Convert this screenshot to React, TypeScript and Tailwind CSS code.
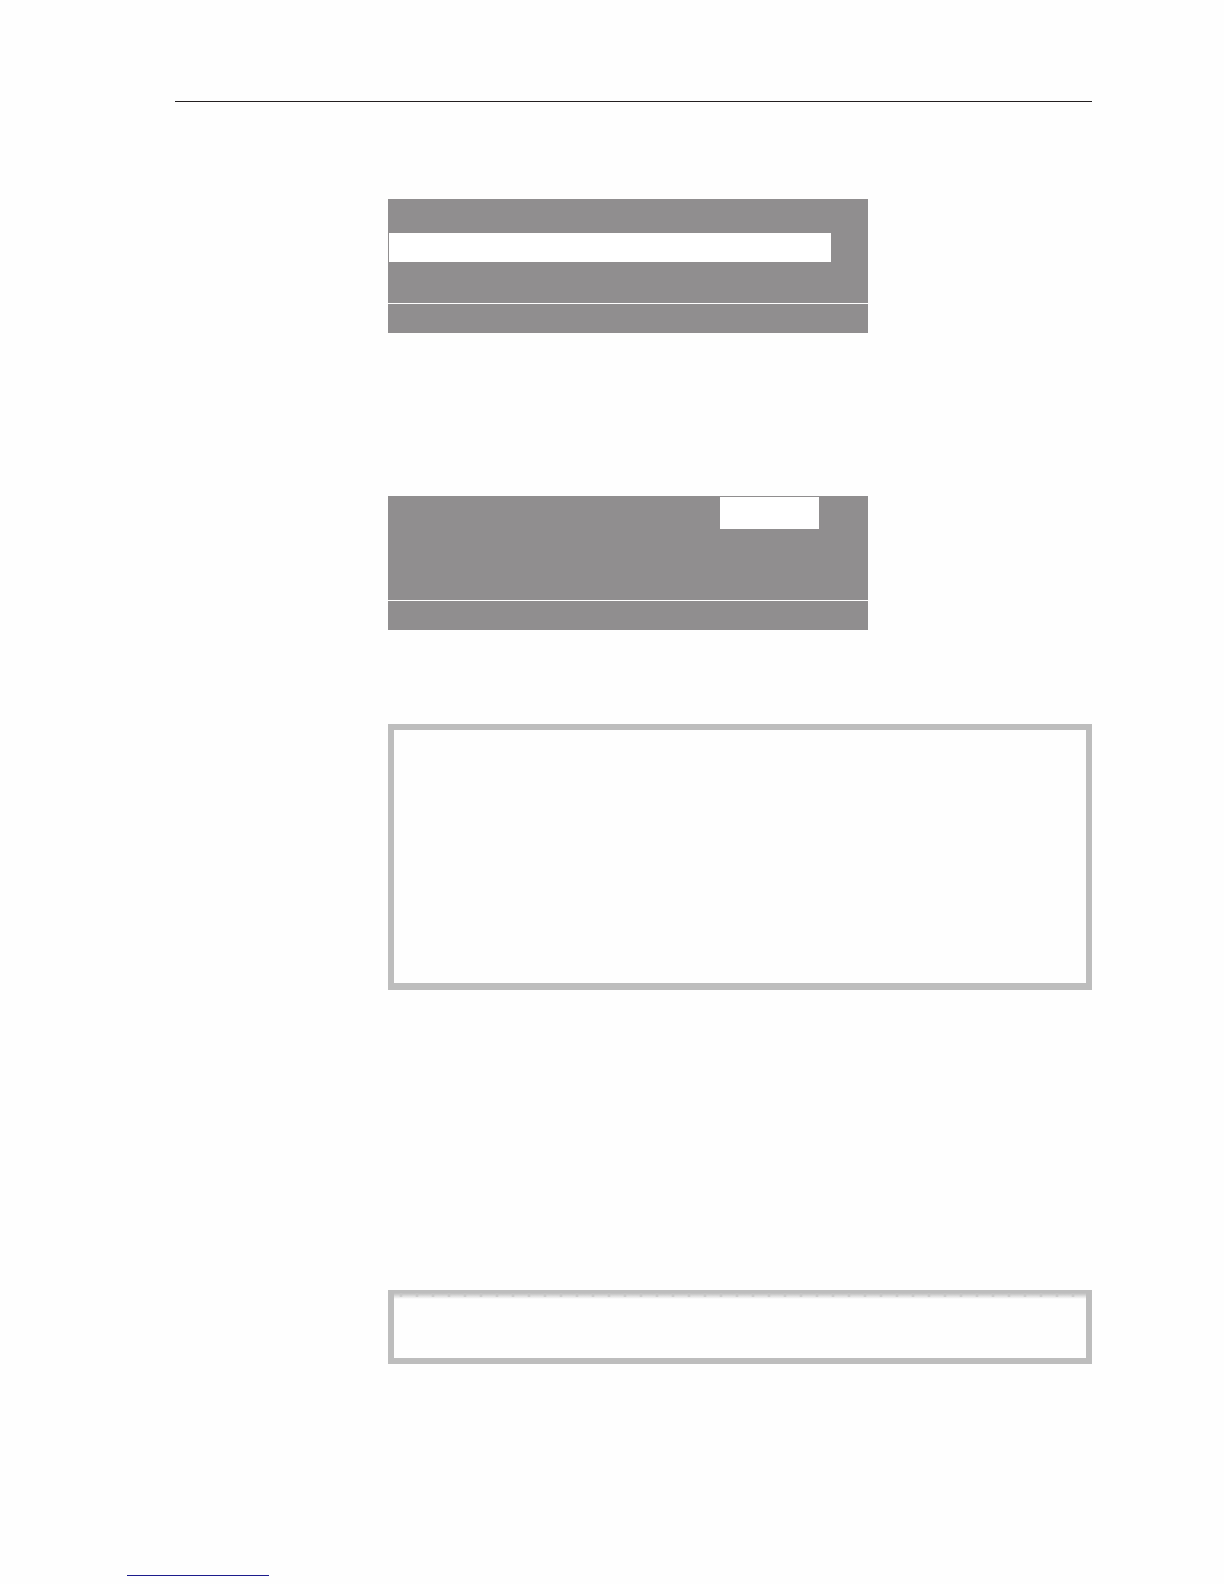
import type { ReactNode } from "react";

const DisplayPanel = ({ children }: { children: ReactNode }) => (
  <div className="flex w-full max-w-[480px] flex-col">
    <div className="h-[104px] bg-[#908e8f]">{children}</div>
    {/* Status row below the thin divider */}
    <div className="mt-px h-[29px] bg-[#908e8f]" />
  </div>
);

const App = () => {
  return (
    <main className="min-h-screen bg-[#fefefe] pb-2">
      <div className="pr-[132px] pl-[175px] pt-[101px]">
        <hr className="h-px border-0 bg-[#231f20]" />

        <div className="flex flex-col pl-[213px]">
          {/* Menu list with selected row */}
          <section className="pt-[97px]">
            <DisplayPanel>
              <div className="pt-[34px] pr-[37px] pl-px">
                <div className="h-[29px] bg-white" />
              </div>
            </DisplayPanel>
          </section>

          {/* Display with selected value */}
          <section className="pt-[163px]">
            <DisplayPanel>
              <div className="flex justify-end pt-px pr-[49px]">
                <div className="h-8 w-[99px] bg-white" />
              </div>
            </DisplayPanel>
          </section>

          {/* Note box */}
          <section className="mt-[94px] h-[266px] border-6 border-b-7 border-[#bdbdbd] bg-[#fefefe]" />

          {/* Short note box, the top edge fades out with small notches */}
          <section className="mt-[300px] h-[74px] border-6 border-t-3 border-[#bdbdbd] bg-[#fefefe]">
            <div className="h-[6px] bg-linear-to-b from-[#bdbdbd] to-[#fefefe]">
              <div className="h-1 bg-[repeating-linear-gradient(90deg,transparent_0px,transparent_5px,#c6c6c6_7px,transparent_9px,transparent_16px)]" />
            </div>
          </section>
        </div>
      </div>

      <a href="#" className="mt-[211px] ml-[127px] block h-px w-[142px] bg-[#1c1c8c]" />
    </main>
  );
};

export default App;
